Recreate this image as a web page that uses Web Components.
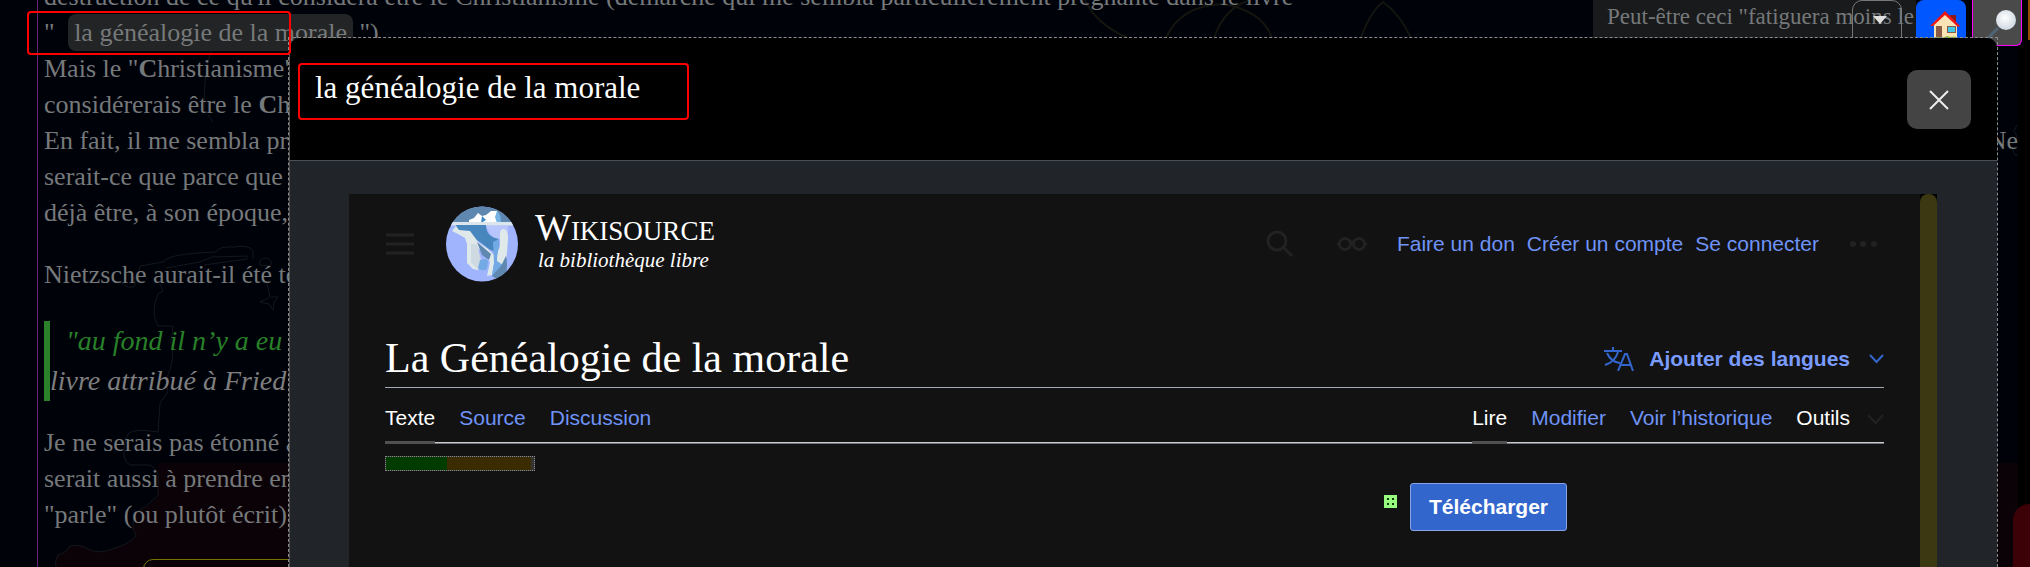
<!DOCTYPE html>
<html lang="fr">
<head>
<meta charset="utf-8">
<title>La Généalogie de la morale</title>
<style>
  html, body { margin: 0; height: 100%; overflow: hidden; background: #00020a; }
</style>
</head>
<body>
<reader-page></reader-page>

<script>
const define = (name, html) => {
  const template = document.createElement('template');
  template.innerHTML = html;
  customElements.define(name, class extends HTMLElement {
    constructor() {
      super();
      this.attachShadow({ mode: 'open' }).append(template.content.cloneNode(true));
    }
  });
};

/* Faint line art behind the article */
define('page-backdrop', `
<style>
  :host { display: block; position: absolute; inset: 0; overflow: hidden; }
  svg { position: absolute; top: 0; left: 0; width: 100%; height: 100%; }
  .edge { position: absolute; top: 0; bottom: 0; right: 0; width: 12px; background: #000; }
  .wine { position: absolute; top: 463px; bottom: 0; left: 158px; right: 12px; background: #0b0208; }
  .blob { position: absolute; top: 504px; right: 0; bottom: 0; width: 17px; background: #3b0106; border-radius: 16px 0 0 0; }
</style>
<div class="edge"></div>
<div class="wine"></div>
<svg aria-hidden="true" fill="none" stroke="#14171c">
  <path fill="#00020a" stroke="none" d="M150 463 H152 Q160 470 158 480 L157 496 Q146 508 136 512 Q130 524 137 536 L132 543 L150 543 H158 V463Z"/>
  <path fill="#0b0208" stroke="none" d="M158 497 Q148 508 138 510 Q130 520 136 536 Q130 544 112 549 Q100 554 90 550 Q78 543 70 546 Q66 553 58 555 Q54 562 56 567 H160 Z"/>
  <path d="M139 272 L140 266 L163 262 Q168 255 198 253 L216 252 Q218 246 235 247 Q248 244 253 251 V259 M166 268 L200 262 L212 257 L247 256 V259 L204 265 M120 282 Q130 290 135 286 V276 M160 284 L163 291 L158 294 Q150 312 158 326 L173 326 L171 342 Q176 358 166 380 L168 392 L160 403 L158 432 L150 431 Q128 428 126 438 Q120 460 130 465 H150 Q160 470 158 480 L158 495 Q146 508 136 512 Q130 524 136 536 Q130 544 112 549 Q100 554 90 550 Q78 543 70 546 Q66 553 58 555 Q54 562 56 567 M260 265 Q258 258 266 258 Q274 260 270 266 Z M267 284 L270 297 L260 302 L269 304 L273 310 L274 302 L278 297 L271 297"/>
  <path stroke="#15150f" stroke-width="2" d="M1361 38 Q1370 12 1383 2 Q1400 14 1411 38 M1085 0 Q1096 24 1128 38 M1166 38 Q1180 6 1222 4 Q1262 10 1272 38 M1214 38 Q1224 8 1250 0"/>
  <path d="M215 44 Q204 60 204 110 M213 122 L208 115"/>
  <path d="M2017 125 l-3 6 l3 6 l-4 7 M2012 148 l3 7 l3 0"/>
</svg>
<div class="blob"></div>
`);

/* Article text lying under the dialog */
define('reader-article', `
<style>
  :host { display: block; position: relative; margin: -21px 12px 0 37px; padding-left: 6px;
    border-left: 1px solid #63217a; font: 26px/36px "Liberation Serif", serif; color: #76797a; white-space: nowrap; }
  p { margin: 0 0 26px; }
  p span { display: block; }
  .wide { display: flex; justify-content: space-between; }
  mark { background: #232425; color: inherit; padding: 4px 6px; margin: 0 0 0 7px; border-radius: 8px; }
  blockquote { margin: 28px 0 24px; font-size: 28px; line-height: 40px; font-style: italic;
    border-left: 6px solid #2a812a; color: #7e7e7e; }
  blockquote span { display: block; }
  .lead { color: #288028; padding-left: 16px; }
  .frame { margin: 0 100px 0 99px; height: 60px; border: 1px solid #777400; border-radius: 10px; }
</style>
<p>
  <span>destruction de ce qu'il considéra être le Christianisme (démarche qui me sembla particulièrement prégnante dans le livre</span>
  <span>" <mark>la généalogie de la morale</mark> ").</span>
  <span>Mais le "<b>C</b>hristianisme"</span>
  <span>considérerais être le <b>C</b>h</span>
  <span class="wide"><i style="font-style:normal">En fait, il me sembla pr</i><i style="font-style:normal">Ne</i></span>
  <span>serait-ce que parce que</span>
  <span>déjà être, à son époque,</span>
</p>
<p>Nietzsche aurait-il été to</p>
<blockquote><span class="lead">"au fond il n’y a eu</span><span>livre attribué à Fried</span></blockquote>
<p>
  <span>Je ne serais pas étonné a</span>
  <span>serait aussi à prendre en</span>
  <span>"parle" (ou plutôt écrit)</span>
</p>
<div class="frame"></div>
`);

define('reader-toolbar', `
<style>
  :host { display: flex; position: absolute; top: 0; right: 0; height: 46px; overflow: hidden; }
  .note { position: relative; width: 309px; height: 46px; padding-left: 14px; background: #191a1c;
    font: 23px/34px "Liberation Serif", serif; color: #76797a; white-space: nowrap; overflow: hidden; }
  button { box-sizing: border-box; width: 50px; height: 46px; padding: 0; border: 0; margin-right: 6px; }
  svg { display: block; }
  .drop { position: absolute; top: 0; right: 14px; height: 60px; margin: 0; background: none; border: 1px solid #777; border-radius: 10px; }
  .drop svg { position: absolute; top: 15px; left: 20px; }
  .home { background: #0057ff; border-radius: 8px; }
  .find { background: #4a4a4a; border: 1px solid #f0f; border-top: 0; border-radius: 0 0 6px 6px; }
  .more { width: 2px; margin: 0; height: 40px; background: #944a00; }
</style>
<div class="note">Peut-être ceci "fatiguera moins le
  <button class="drop" aria-label="Ouvrir la liste"><svg width="14" height="8"><path d="M0 0h14l-7 8z" fill="#e0e0e0"/></svg></button>
</div>
<button class="home" aria-label="Accueil"><svg width="50" height="46">
  <path d="M34 15h6v13h-6z" fill="#8b1a1a"/><path d="M18 22 29 13 41 24v16H18z" fill="#fbe3b5"/>
  <path d="M14 26 29 11 44 26l-2 1-13-12-12 11z" fill="#f01414"/>
  <path d="M20 26h6v12h-6z" fill="#8a5a44"/><path d="M31 26h9v7h-9z" fill="#8a5a44"/><path d="M32 27h7v5h-7z" fill="#3fc8e8"/>
  <path d="M16 40q3-4 6-3l4 1 5-2 4 1q6-2 7 3z" fill="#86c232"/></svg></button>
<button class="find" aria-label="Rechercher"><svg width="48" height="46">
  <defs><radialGradient id="g" cx=".45" cy=".4" r=".6"><stop offset="0" stop-color="#fff"/><stop offset="1" stop-color="#cfd8e2"/></radialGradient></defs>
  <path d="M15 38 25 28" stroke="#4e6474" stroke-width="3"/><circle cx="33" cy="20" r="10" fill="url(#g)"/></svg></button>
<button class="more" aria-label="Plus"></button>
`);

define('wiki-header', `
<style>
  :host { display: flex; align-items: center; height: 100px; }
  svg { display: block; }
  button { background: none; border: 0; padding: 0; }
  .menu { margin-right: 32px; }
  .brand { display: flex; align-items: center; gap: 17px; margin-right: auto; color: #fff; text-decoration: none; font-family: "Liberation Serif", serif; white-space: nowrap; }
  .words { padding-bottom: 6px; }
  .name { display: block; font-size: 27px; line-height: 34px; }
  .name b { font-weight: 400; font-size: 38px; }
  .tag { display: block; font-size: 21px; line-height: 24px; font-style: italic; padding-left: 3px; }
  nav { display: flex; align-items: center; gap: 12px; font: 21px/24px "Liberation Sans", sans-serif; white-space: nowrap; }
  nav a { color: #6f93f6; text-decoration: none; }
  .search { margin-right: 43px; }
  .glasses { margin-right: 30px; }
  .dots { margin: 0 7px 0 30px; }
</style>
<button class="menu" aria-label="Menu principal"><svg width="29" height="22"><path d="M1 2h28M1 11h28M1 20h28" stroke="#222" stroke-width="3"/></svg></button>
<a class="brand" href="#">
  <svg width="72" height="76" viewBox="0 0 72 76"><defs><clipPath id="c"><ellipse cx="36" cy="38" rx="36" ry="37.5"/></clipPath></defs>
    <g clip-path="url(#c)"><path fill="#a0b4fe" d="M0 0h72v76H0z"/><path fill="#5e88b0" d="M0 0h72v18H0z"/>
    <path fill="#b8c5fd" d="M40 20h22v14q-10 2-18-6z"/>
    <path fill="#fff" d="M23 17v-3l5-2 4-5 4 3 4-1 5-4 6 0v12z"/><path fill="#3b87c4" d="m36 10 4 4-5 3z"/><path fill="#73b2e4" d="M51 5q4 3 4 12h-4l-2-6z"/>
    <path fill="#dce5ec" d="M0 16h72v3.500H0z"/>
    <path fill="#4787bd" d="M10 19h30q0 12 13 14l-2 14-8-4-9-7-11-6-12-7z"/>
    <path fill="#dfe9ea" d="M10 20l3 4 11 1 3 4 6 8 9 6 6 6v9l-2 11-5 1 3-14-5-8-10-8 6 14-3 10-5-1-6-6V38l-2-6-7-4-6-3z"/>
    <path fill="#cfd9e1" d="M25 38l6 0 4 16-3 9-7-6z"/>
    <path fill="#5e88b0" d="M31 36l14 12-2 6-7-5z"/><path fill="#73aae6" d="M34 54q8-3 8 2l-1 7q-5 3-9-1z"/>
    <path fill="#73aae6" d="M47 36l6-3v17l5 8-6 12-6-1 2-12z"/>
    <path fill="#dfe9ea" d="M54 28q0-5 4-5 4 1 4 10l-1 13q-1 10-4 13l-6-4q0-9 3-15z"/>
    <path fill="#5e88b0" d="M60 50q2 8 0 20-8 5-14 0l9-10z"/></g></svg>
  <span class="words"><span class="name"><b>W</b>IKISOURCE</span><span class="tag">la bibliothèque libre</span></span>
</a>
<button class="search" aria-label="Rechercher"><svg width="28" height="28" fill="none" stroke="#222" stroke-width="3"><circle cx="11" cy="11" r="9"/><path d="m17 17 9 9"/></svg></button>
<button class="glasses" aria-label="Apparence"><svg width="30" height="16" fill="none" stroke="#222" stroke-width="3"><circle cx="8" cy="8" r="5.500"/><circle cx="22" cy="8" r="5.500"/><path d="M13 7q2-2 4 0M0 8h3M27 8h3"/></svg></button>
<nav><a href="#">Faire un don</a><a href="#">Créer un compte</a><a href="#">Se connecter</a></nav>
<button class="dots" aria-label="Outils personnels"><svg width="28" height="8" fill="#222"><circle cx="4" cy="4" r="3"/><circle cx="14" cy="4" r="3"/><circle cx="25" cy="4" r="3"/></svg></button>
`);

define('wiki-title', `
<style>
  :host { display: flex; align-items: center; height: 57px; margin-top: 36px; border-bottom: 1px solid #a2a9b1; }
  h1 { flex: 1; margin: 0; font: 400 42px/57px "Liberation Serif", serif; color: #fff; white-space: nowrap; }
  button { display: flex; align-items: center; background: none; border: 0; padding: 0; color: #7b9cff; font: bold 21px/24px "Liberation Sans", sans-serif; white-space: nowrap; }
  .lang { margin-right: 15px; } .chev { margin-left: 19px; }
</style>
<h1>La Généalogie de la morale</h1>
<button>
  <svg class="lang" width="30" height="24" fill="none" stroke="#3366cc" stroke-width="2"><path d="M0 4h18M9 0v4M3 6q4 9 13 10M14 5Q11 15 1 18M14 24l7-17h2l6 17M17 18h9"/></svg>
  Ajouter des langues
  <svg class="chev" width="15" height="10" fill="none" stroke="#3366cc" stroke-width="2"><path d="m1 1 6.500 7L14 1"/></svg>
</button>
`);

define('wiki-tabs', `
<style>
  :host { display: flex; justify-content: space-between; height: 54px; border-bottom: 1px solid #c8ccd1; box-shadow: 0 1px #72777d;
    font: 21px/24px "Liberation Sans", sans-serif; white-space: nowrap; }
  nav { display: flex; gap: 24px; }
  a, button { display: block; box-sizing: border-box; height: 56px; padding: 18px 0 0; color: #6f93f6; text-decoration: none; }
  a.on { color: #fff; border-bottom: 3px solid #505050; }
  button { display: flex; gap: 17px; background: none; border: 0; color: #fff; font: inherit; }
  svg { margin-top: 8px; }
</style>
<nav aria-label="Espaces"><a class="on" href="#">Texte</a><a href="#">Source</a><a href="#">Discussion</a></nav>
<nav aria-label="Vues"><a class="on" href="#">Lire</a><a href="#">Modifier</a><a href="#">Voir l’historique</a>
  <button>Outils<svg width="17" height="11" fill="none" stroke="#222" stroke-width="2"><path d="m1 1 7.500 8L16 1"/></svg></button></nav>
`);

define('wiki-content', `
<style>
  :host { display: block; }
  .quality { display: flex; box-sizing: border-box; width: 150px; height: 15px; margin-top: 13px; border: 1px dotted #8a8a8a; background: #343434; }
  .ok { width: 61px; background: #003c00; } .todo { width: 84px; background: #3a2b00; }
  .actions { display: flex; justify-content: flex-end; gap: 13px; margin-top: 12px; padding-right: 317px; }
  .actions svg { margin-top: 12px; }
  button { height: 48px; padding: 0 18px; border: 1px solid #88a3e8; border-radius: 3px; background: #3366cc; color: #fff; font: bold 21px/24px "Liberation Sans", sans-serif; }
</style>
<div class="quality"><span class="ok"></span><span class="todo"></span></div>
<div class="actions">
  <svg width="13" height="13" aria-hidden="true"><path fill="#98fb80" d="M0 0h13v13H0z"/><path fill="#0a3a00" d="M3 3h2v2H3zM8 3h2v2H8zM3 8h2v2H3zM8 8h2v2H8z"/></svg>
  <button>Télécharger</button>
</div>
`);

define('wiki-frame', `
<style>
  :host { display: flex; flex: 1; background: #000; }
  main { flex: 1; min-width: 0; padding: 0 36px; background: #121212; }
  .bar { width: 17px; background: #3b3812; border-radius: 8px 8px 0 0; }
</style>
<main><wiki-header></wiki-header><wiki-title></wiki-title><wiki-tabs></wiki-tabs><wiki-content></wiki-content></main>
<div class="bar"></div>
`);

define('preview-dialog', `
<style>
  :host { display: flex; position: absolute; top: 37px; left: 288px; right: 32px; bottom: -10px; border: 1px dashed #8c8c8c; }
  section { display: flex; flex-direction: column; flex: 1; min-width: 0; border-left: 1px solid #555; border-radius: 10px 10px 0 0; overflow: hidden; background: #212529; }
  header { display: flex; justify-content: space-between; align-items: flex-start; box-sizing: border-box; height: 123px; padding: 32px 26px 0 25px; background: #000; border-bottom: 1px solid #495057; }
  h2 { margin: 0; font: 400 31px/36px "Liberation Serif", serif; color: #fff; white-space: nowrap; }
  button { display: grid; place-items: center; width: 64px; height: 59px; padding: 0; border: 0; border-radius: 10px; background: #444; }
  .body { display: flex; flex: 1; padding: 33px 60px 0 59px; }
</style>
<section role="dialog" aria-label="Aperçu">
  <header><h2><slot name="heading"></slot></h2>
    <button aria-label="Fermer"><svg width="20" height="20" stroke="#eee" stroke-width="2"><path d="m1 1 18 18M19 1 1 19"/></svg></button></header>
  <div class="body"><slot></slot></div>
</section>
`);

define('reader-page', `
<style>
  :host { display: flow-root; position: relative; height: 100vh; overflow: hidden; }
  .ring { position: absolute; box-sizing: border-box; border: 2px solid #f00; border-radius: 4px; pointer-events: none; }
  .source { top: 11px; left: 27px; width: 264px; height: 44px; }
  .target { top: 63px; left: 298px; width: 391px; height: 57px; }
</style>
<page-backdrop></page-backdrop>
<reader-article></reader-article>
<reader-toolbar></reader-toolbar>
<preview-dialog><span slot="heading">la généalogie de la morale</span><wiki-frame></wiki-frame></preview-dialog>
<div class="ring source"></div>
<div class="ring target"></div>
`);
</script>
</body>
</html>
